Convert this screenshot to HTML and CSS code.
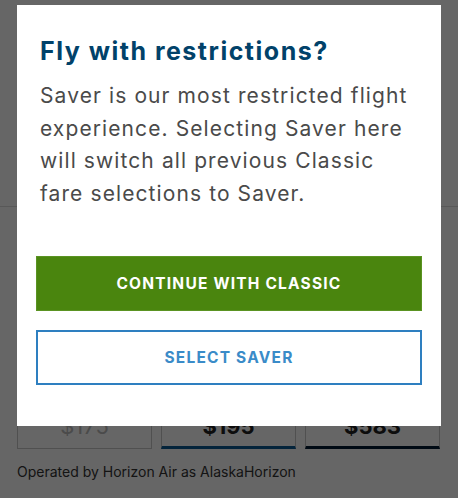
FILE: index.html
```html
<!DOCTYPE html>
<html>
<head>
<meta charset="utf-8">
<link rel="stylesheet" href="styles.css">
</head>
<body>
<div class="page">
  <div class="top-links">
    <span class="link">Details</span>
    <span class="link">View Seats</span>
  </div>
  <div class="upper"></div>
  <div class="divider"></div>
  <div class="lower">
    <div class="fares">
      <div class="fare fare-disabled"><span class="price">$175</span></div>
      <div class="fare fare-blue"><span class="price">$195</span></div>
      <div class="fare fare-navy"><span class="price">$583</span></div>
    </div>
    <div class="operated">Operated by Horizon Air as AlaskaHorizon</div>
  </div>
</div>
<div class="overlay">
  <div class="modal">
    <h1 class="title">Fly with restrictions?</h1>
    <p class="body-text">Saver is our most restricted flight experience. Selecting Saver here will switch all previous Classic fare selections to Saver.</p>
    <div class="actions">
      <button class="btn btn-primary">CONTINUE WITH CLASSIC</button>
      <button class="btn btn-outline">SELECT SAVER</button>
    </div>
  </div>
</div>
</body>
</html>
```

FILE: styles.css
```css
html, body {
  margin: 0;
  padding: 0;
}
body {
  width: 458px;
  height: 498px;
  overflow: hidden;
  background: #fff;
  font-family: "Inter", "Liberation Sans", sans-serif;
  position: relative;
}
.page {
  height: 498px;
  display: flex;
  flex-direction: column;
}
.top-links {
  display: flex;
  justify-content: space-between;
  padding: 0 48px 0 52px;
  margin-top: -14px;
  height: 16px;
  font-size: 16px;
  line-height: 16px;
  font-weight: 700;
  color: #01426a;
}
.upper {
  height: 204px;
}
.divider {
  height: 1px;
  background: #dcdcdc;
}
.lower {
  padding: 188px 18px 0 17px;
}
.fares {
  display: flex;
  gap: 9px;
}
.fare {
  flex: 1;
  height: 54px;
  box-sizing: border-box;
  border: 1px solid #c8c8c8;
  display: flex;
  align-items: flex-end;
  justify-content: center;
  padding-bottom: 10px;
}
.price {
  font-size: 22px;
  line-height: 24px;
  font-weight: 700;
  color: #222;
}
.fare-disabled .price {
  color: #bbb;
  font-weight: 400;
}
.fare-blue {
  border-bottom: 3px solid #0a5a94;
  padding-bottom: 8px;
}
.fare-navy {
  border-bottom: 3px solid #001a33;
  padding-bottom: 8px;
}
.operated {
  margin-top: 14px;
  font-size: 14px;
  color: #333;
}
.overlay {
  position: absolute;
  inset: 0;
  background: rgba(0, 0, 0, 0.6);
}
.modal {
  position: absolute;
  left: 17px;
  top: 5px;
  width: 424px;
  height: 421px;
  box-sizing: border-box;
  background: #fff;
  padding: 31px 19px 0 19px;
}
.title {
  margin: 0;
  padding: 0 4px;
  font-size: 25px;
  line-height: 30px;
  font-weight: 700;
  letter-spacing: 1.5px;
  color: #01426a;
}
.body-text {
  margin: 14px 0 0;
  padding: 0 4px;
  font-size: 21px;
  line-height: 32.5px;
  letter-spacing: 1.1px;
  color: #4a4a4a;
}
.actions {
  margin-top: 46px;
  display: flex;
  flex-direction: column;
  gap: 19px;
}
.btn {
  width: 100%;
  height: 55px;
  font-family: "Inter", "Liberation Sans", sans-serif;
  font-size: 15.5px;
  font-weight: 700;
  letter-spacing: 1.2px;
  cursor: pointer;
}
.btn-primary {
  background: #4a850e;
  color: #fff;
  border: 1px solid #5a9322;
}
.btn-outline {
  background: #fff;
  color: #3a8bc8;
  border: 2px solid #2e7fc0;
}
```
